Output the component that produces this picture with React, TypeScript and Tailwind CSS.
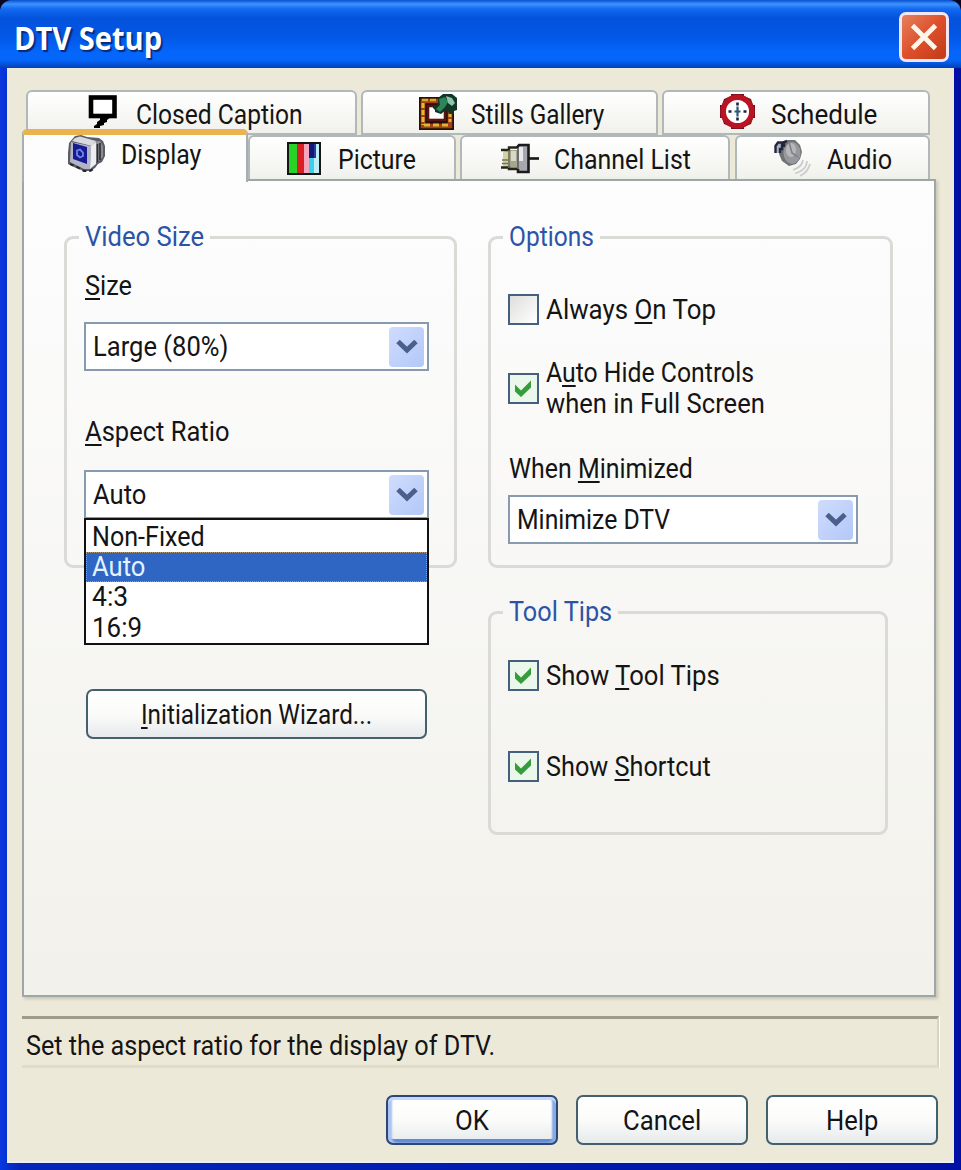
import { useLayoutEffect, useRef, useState, type ReactNode } from "react";

function T({ w, className = "", children }: { w: number; className?: string; children: ReactNode }) {
  const ref = useRef<HTMLSpanElement>(null);
  const [scale, setScale] = useState(1);
  useLayoutEffect(() => {
    if (ref.current) setScale(w / ref.current.offsetWidth);
  }, [w]);
  return (
    <span className={"block h-[30px] shrink-0 whitespace-nowrap leading-[30px] " + className} style={{ width: w }}>
      <span ref={ref} className="inline-block origin-left" style={{ transform: `scaleX(${scale})` }}>
        {children}
      </span>
    </span>
  );
}

function U({ children }: { children: ReactNode }) {
  return (
    <span className="underline decoration-2 underline-offset-[3px] [text-decoration-skip-ink:none]">{children}</span>
  );
}

function Arrow() {
  return (
    <span className="flex h-[40px] w-[35px] items-center justify-center rounded-[4px] bg-linear-to-br from-[#cfdcfd] to-[#b3c8f8]">
      <svg width="22" height="16" viewBox="0 0 22 16">
        <path d="M2 2.5 L11 11 L20 2.5" fill="none" stroke="#4a5f8c" strokeWidth="5" />
      </svg>
    </span>
  );
}

function Combo({ w, text, className }: { w: number; text: string; className: string }) {
  return (
    <div className={"flex h-[49px] items-center justify-between border-2 border-[#869bb0] bg-white pr-[3px] pl-[7px] " + className}>
      <T w={w}>{text}</T>
      <Arrow />
    </div>
  );
}

function Check({ on, className = "" }: { on?: boolean; className?: string }) {
  return (
    <span
      className={
        "flex h-[31px] w-[31px] shrink-0 items-center justify-center border-2 border-[#45607f] bg-linear-to-br from-[#dedfdc] to-white " +
        className
      }
    >
      {on && (
        <svg width="27" height="27" viewBox="0 0 27 27">
          <rect width="27" height="27" fill="#eaf7ea" />
          <path d="M5 9.5 L11 15.5 L21 5.5 V12.5 L11 22 L5 16.5 Z" fill="#369b3a" />
        </svg>
      )}
    </span>
  );
}

function Group({ title, w, className, children }: { title: string; w: number; className: string; children: ReactNode }) {
  return (
    <fieldset className={"rounded-[9px] border-[3px] border-[#dadad6] pl-[17px] " + className}>
      <legend className="-ml-[5px] px-[6px] text-[#2b54a6]">
        <T w={w}>{title}</T>
      </legend>
      {children}
    </fieldset>
  );
}

function CaptionIcon() {
  return (
    <svg width="30" height="34" viewBox="0 0 30 34">
      <rect x="3" y="2.5" width="23.5" height="18.5" fill="#fff" stroke="#000" strokeWidth="4.6" />
      <path d="M12 22 H23 L19 25 V27 L16 28 V30 L12 31 V33 H6 V31 L9 29 V27 L12 25 Z" fill="#000" />
    </svg>
  );
}

function MonitorIcon() {
  return (
    <svg width="40" height="38" viewBox="0 0 40 38">
      <path d="M8 1 L14 0 L20 2 L32 3 L36 6 L38 11 V21 L35 27 L31 29 L28 33 L23 36 L17 36 L9 33 L1 29 L1 18 L2 8 Z" fill="#5b5c66" />
      <path d="M27 6 L33 6 L36 11 V22 L32 26 L29 27 Z" fill="#8b8b92" />
      <path d="M33 8 V25 M30.500 9 V27" stroke="#2c2c34" strokeWidth="1.600" />
      <path d="M8 3 L13 1.500 L29 6 L25 11 L5 6 Z" fill="#d9d9e0" />
      <path d="M4 7 L24 11 L23 34 L17 34 L3 27 Z" fill="#b4b5c4" />
      <path d="M24 11 L29 7 L29 29 L23 34 Z" fill="#ededf2" />
      <path d="M6 8 L20 12 V29 L6 24 Z" fill="#161a94" />
      <path d="M10 15.500 L13 14.500 L16 17.500 V21 L13 22.500 L10 20 Z" fill="none" stroke="#6f86e6" strokeWidth="1.800" />
      <path d="M3 29 L10 32 L17 36 H23 L28 33" fill="none" stroke="#25252c" strokeWidth="2" strokeDasharray="4 3" />
    </svg>
  );
}

function GalleryIcon() {
  return (
    <svg width="39" height="37" viewBox="0 0 39 37">
      <rect x="0" y="3" width="35" height="33" fill="#24100a" />
      <rect x="4" y="7" width="27" height="25" fill="none" stroke="#a2401a" strokeWidth="4.500" />
      <path d="M3 6 H20" stroke="#d9a82a" strokeWidth="2.600" strokeDasharray="6 2" />
      <path d="M4 9 V31" stroke="#e3bb2d" strokeWidth="3" strokeDasharray="5 2" />
      <path d="M5 31 H31" stroke="#dfb42e" strokeWidth="3" strokeDasharray="6 3" />
      <path d="M31 20 V30" stroke="#dfb42e" strokeWidth="3" strokeDasharray="3 2" />
      <rect x="9" y="12" width="17" height="14" fill="#fff" stroke="#5c1210" strokeWidth="2.600" />
      <path d="M19 4 L24 0 H33 L38 4 V16 L35 17 V20 H31 L27 16 L22 20 L16 18 L13 13 L19 10 Z" fill="#123625" />
      <path d="M20 5 L26 3 L29 8 L26 13 L21 18 L17 15 L21 11 Z" fill="#2d8558" />
      <path d="M27 2 L33 4 L36 9 L33 12 L29 9 Z" fill="#8fc4aa" />
      <path d="M13 13 L16 16 V21 L12 24 Z" fill="#fff" />
    </svg>
  );
}

function ScheduleIcon() {
  return (
    <svg width="37" height="37" viewBox="0 0 37 37">
      <path d="M12 1 H25 V3 L32 6 L34 12 H36 V25 H34 L32 31 L25 34 V36 H12 V34 L5 31 L3 25 H1 V12 H3 L5 6 L12 3 Z" fill="#74101b" />
      <circle cx="18.500" cy="18.500" r="14.300" fill="#fff" stroke="#b91424" strokeWidth="5.500" />
      <path d="M18.500 9.500 V12.500 M18.500 24.500 V27.500 M9.500 18.500 H12.500 M24.500 18.500 H27.500" stroke="#1d2530" strokeWidth="2.600" />
      <path d="M18.500 13.500 V23.500 M15.500 18.500 H21.500" stroke="#2b5878" strokeWidth="2.200" />
    </svg>
  );
}

function BarsIcon() {
  return (
    <svg width="34" height="33" viewBox="0 0 34 33">
      <rect width="34" height="33" fill="#151515" />
      <rect x="2" y="2" width="8" height="29" fill="#27d326" />
      <rect x="10" y="2" width="7" height="29" fill="#d91f25" />
      <rect x="17" y="2" width="5" height="29" fill="#f4a6bd" />
      <rect x="22" y="2" width="5" height="14" fill="#11187a" />
      <rect x="22" y="16" width="5" height="15" fill="#3dd0ea" />
      <rect x="27" y="2" width="5" height="29" fill="#bdeef6" />
      <rect x="27" y="2" width="2" height="14" fill="#2a3aa0" />
    </svg>
  );
}

function PlugIcon() {
  return (
    <svg width="40" height="31" viewBox="0 0 40 31">
      <path d="M3 9 L9 6 V26 L3 23 Z" fill="#d2d4a0" />
      <path d="M8 7 H18 V26 H8 Z" fill="#a5a68c" />
      <path d="M11 8 H16 V18 H11 Z" fill="#d8d9c8" />
      <path d="M1 7 H9 V4.500 H18" fill="none" stroke="#25251e" strokeWidth="2.400" />
      <path d="M1 24.500 H9 V26 H18" fill="none" stroke="#25251e" strokeWidth="2.400" />
      <path d="M2 17 H8 M2 20.500 H8 M9 7 V25" stroke="#72735a" strokeWidth="1.600" />
      <rect x="18" y="2" width="10.500" height="27" fill="#a7a7ae" />
      <path d="M21 4 V18" stroke="#e8e8ee" strokeWidth="4" />
      <path d="M17 4.500 L19 2 H28.500 V29 H18 V26" fill="none" stroke="#1b1b1d" strokeWidth="2.600" />
      <path d="M18 5 V26" stroke="#606064" strokeWidth="1.600" />
      <path d="M28 15.500 H39" stroke="#151515" strokeWidth="2.600" />
    </svg>
  );
}

function SpeakerIcon() {
  return (
    <svg width="38" height="38" viewBox="0 0 38 38">
      <path d="M8 6 L13 1 H21 L26 6 L28 13 L26 20 L22 25 L15 27 L8 22 L5 15 Z" fill="#707276" />
      <ellipse cx="18" cy="14" rx="8.500" ry="11" fill="#96989c" />
      <ellipse cx="17" cy="11" rx="5" ry="7" fill="#b6b7ba" />
      <path d="M15 3 L18 14 L24 18" fill="none" stroke="#808287" strokeWidth="1.600" />
      <path d="M1.500 14 V7 L4 3.500 H8 V10 H6 V14" fill="#aeb4c8" stroke="#20283a" strokeWidth="2.400" />
      <path d="M10 8 V3 L13 2" fill="none" stroke="#20283a" strokeWidth="2.400" />
      <path d="M29 21 Q28 28 19 31 M33 22 Q33 31 21 34.500 M36 25 Q34 33 26 37" fill="none" stroke="#cbccce" strokeWidth="1.800" />
    </svg>
  );
}

const tabBase =
  "flex items-center rounded-t-[6px] border-2 border-[#b0b8ba] bg-linear-to-b from-white to-[#f1f1ec] ";

const buttonBase =
  "flex h-[50px] items-center justify-center rounded-[7px] border-[2.5px] bg-linear-to-b from-white via-[#fbfbfa] to-[#e6eaec] ";

export default function App() {
  return (
    <div className="h-[1170px] w-[961px] bg-[#0a0620] font-['Roboto','Liberation_Sans',sans-serif] text-[28px] text-[#141414]">
      <div className="flex h-full flex-col rounded-t-[12px] bg-linear-to-r from-[#0838e0] via-[#0426b8] via-[2%] to-[#0010a4]">
        <header className="flex h-[68px] shrink-0 items-start justify-between rounded-t-[12px] bg-[linear-gradient(180deg,#0a4fd0_0px,#3b94ff_4px,#1468f0_9px,#0453dc_18px,#0355e4_34px,#0566fc_52px,#0566fb_60px,#0341b4_68px)] pt-[12px] pr-[12px] pl-[14px]">
          <T
            w={148}
            className="mt-[11px] font-['Open_Sans'] text-[32px] font-bold text-white [text-shadow:2px_2px_1px_#08287c]"
          >
            DTV Setup
          </T>
          <button className="flex h-[50px] w-[50px] items-center justify-center rounded-[7px] border-[3px] border-[#f3e6f0] bg-linear-to-br from-[#e5805e] via-[#dd4f2a] to-[#c23a18]">
            <svg width="28" height="28" viewBox="0 0 28 28">
              <path d="M2.500 2.500 L25.500 25.500 M25.500 2.500 L2.500 25.500" stroke="#fff5e8" strokeWidth="4.800" />
            </svg>
          </button>
        </header>

        <main className="mr-[7px] mb-[7px] ml-[7px] flex flex-1 flex-col border-b-2 border-[#e9eef8] bg-[#ece9d8] pl-[15px]">
          <div className="mt-[22px] ml-[4px] flex h-[45px] gap-[4px]">
            <div className={tabBase + "w-[331px] pl-[60px]"}>
              <div className="-mt-[1px] self-start pt-[4px]">
                <CaptionIcon />
              </div>
              <T w={167} className="ml-[18px] mt-[4px]">Closed Caption</T>
            </div>
            <div className={tabBase + "w-[297px] pl-[56px]"}>
              <GalleryIcon />
              <T w={133} className="ml-[13px] mt-[4px]">Stills Gallery</T>
            </div>
            <div className={tabBase + "w-[268px] pl-[55px]"}>
              <div className="-mt-[2px]">
                <ScheduleIcon />
              </div>
              <T w={106} className="ml-[15px] mt-[4px]">Schedule</T>
            </div>
          </div>

          <div className="flex h-[46px] items-start">
            <div className="relative z-10 -mt-[6px] flex h-[53px] w-[226px] rounded-t-[5px] border-x-2 border-t-[6px] border-x-[#a5afb2] border-t-[#eab350] bg-[#fdfdfe] pl-[43px]">
              <MonitorIcon />
              <T w={80} className="mt-[5px] ml-[14px]">Display</T>
            </div>
            <div className={tabBase + "h-[46px] w-[208px] pl-[37px]"}>
              <BarsIcon />
              <T w={78} className="mt-[4px] ml-[17px]">Picture</T>
            </div>
            <div className={tabBase + "ml-[4px] h-[46px] w-[270px] pl-[38px]"}>
              <PlugIcon />
              <T w={137} className="mt-[4px] ml-[14px]">Channel List</T>
            </div>
            <div className={tabBase + "ml-[5px] h-[46px] w-[195px] pl-[37px]"}>
              <SpeakerIcon />
              <T w={65} className="mt-[4px] ml-[15px]">Audio</T>
            </div>
          </div>

          <section className="-mt-[2px] flex h-[818px] w-[914px] gap-[31px] border-2 border-[#9ea7a8] bg-linear-to-b from-[#fdfdfe] to-[#f2f1eb] pt-[41px] pl-[40px] shadow-[2px_2px_3px_#c9c6b6]">
            <div className="w-[393px]">
              <Group title="Video Size" w={119} className="h-[346px]">
                <T w={47} className="mt-[19px] ml-[1px]"><U>S</U>ize</T>
                <Combo w={135} text="Large (80%)" className="mt-[21px] w-[345px]" />
                <T w={144} className="mt-[46px] ml-[1px]"><U>A</U>spect Ratio</T>
                <div className="relative mt-[23px] w-[345px]">
                  <Combo w={53} text="Auto" className="w-[345px]" />
                  <div className="absolute top-[48px] left-0 z-20 h-[127px] w-[345px] border-2 border-[#111] bg-white">
                    <div className="flex h-[32px] items-center pt-[1px] pl-[6px]"><T w={113}>Non-Fixed</T></div>
                    <div className="flex h-[30px] items-center border border-dotted border-[#b09a78] bg-[#2f66c4] pl-[5px] text-[#e4f3ff]">
                      <T w={53}>Auto</T>
                    </div>
                    <div className="flex h-[30px] items-center pl-[6px]"><T w={36}>4:3</T></div>
                    <div className="flex h-[31px] items-center pl-[6px]"><T w={50}>16:9</T></div>
                  </div>
                </div>
              </Group>
              <button className={buttonBase + "mt-[121px] ml-[22px] w-[341px] border-[#43606f]"}>
                <T w={231} className="mt-[2px]"><U>I</U>nitialization Wizard...</T>
              </button>
            </div>

            <div className="w-[405px]">
              <Group title="Options" w={85} className="h-[346px]">
                <div className="mt-[42px] flex items-center">
                  <Check />
                  <T w={170} className="ml-[7px] mt-[1px]">Always <U>O</U>n Top</T>
                </div>
                <div className="mt-[33px] flex">
                  <Check on className="mt-[15px]" />
                  <div className="ml-[7px]">
                    <T w={208}>A<U>u</U>to Hide Controls</T>
                    <T w={219} className="mt-[1px]">when in Full Screen</T>
                  </div>
                </div>
                <T w={184} className="mt-[35px] ml-[1px]">When <U>M</U>inimized</T>
                <Combo w={153} text="Minimize DTV" className="mt-[11px] w-[350px]" />
              </Group>
              <Group title="Tool Tips" w={103} className="mt-[29px] h-[238px] w-[400px]">
                <div className="mt-[33px] flex items-center">
                  <Check on />
                  <T w={174} className="ml-[7px]">Show <U>T</U>ool Tips</T>
                </div>
                <div className="mt-[60px] flex items-center">
                  <Check on />
                  <T w={165} className="ml-[7px]">Show <U>S</U>hortcut</T>
                </div>
              </Group>
            </div>
          </section>

          <div className="mt-[19px] h-[52px] w-[917px] border-t-[3px] border-r-2 border-b-[3px] border-t-[#9d9b8c] border-r-[#d6d3c2] border-b-[#dfdccb] pt-[12px] pl-[4px] shadow-[1px_0_0_#fffdf4]">
            <T w={469}>Set the aspect ratio for the display of DTV.</T>
          </div>

          <footer className="mt-[27px] flex gap-[18px] pl-[364px]">
            <button className={buttonBase + "w-[172px] border-[#2c4678] shadow-[inset_0_3px_0_#c5d8fb,inset_4px_0_2px_#a9c3f2,inset_-4px_0_2px_#86a9e4,inset_0_-4px_0_#638bd0]"}>
              <T w={34} className="mt-[2px]">OK</T>
            </button>
            <button className={buttonBase + "w-[172px] border-[#43606f]"}>
              <T w={78} className="mt-[2px]">Cancel</T>
            </button>
            <button className={buttonBase + "w-[172px] border-[#43606f]"}>
              <T w={52} className="mt-[2px]">Help</T>
            </button>
          </footer>
        </main>
      </div>
    </div>
  );
}
